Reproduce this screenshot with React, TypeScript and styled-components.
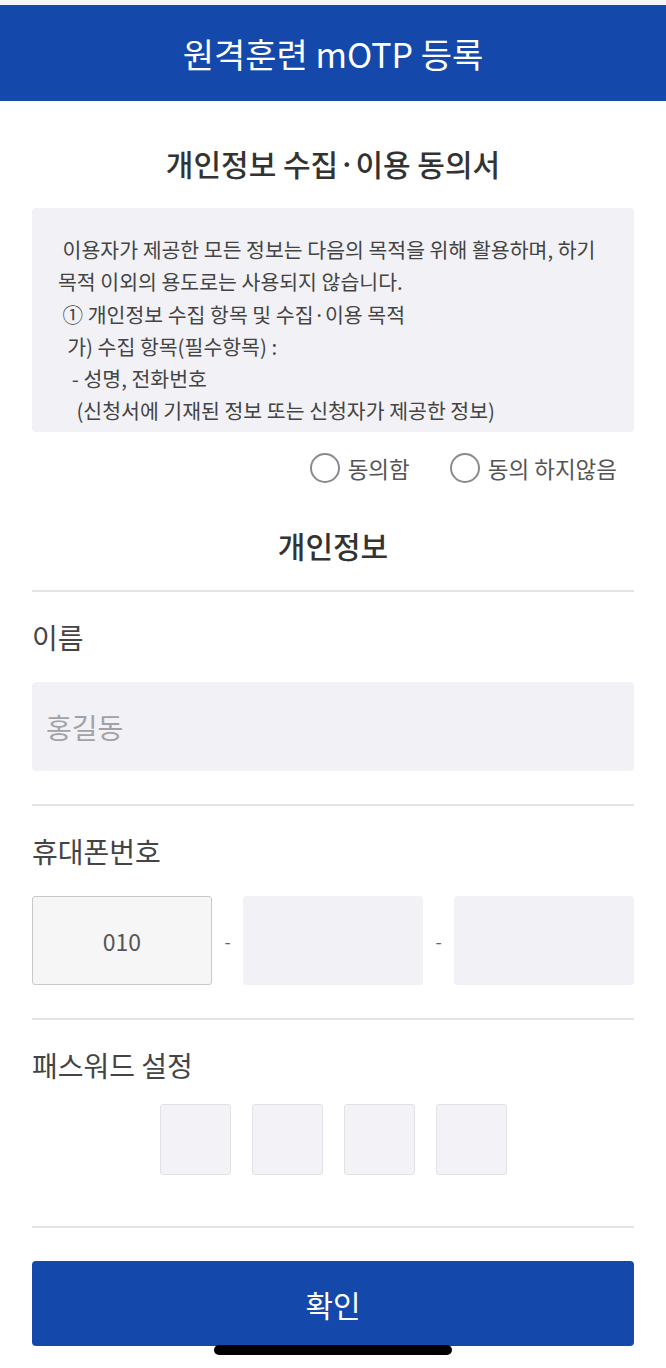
import React from "react";
import styled, { createGlobalStyle } from "styled-components";

const fontStack = `"Noto Sans CJK KR", "Noto Sans", sans-serif`;
const brandBlue = "#1449ab";
const fieldBg = "#f2f2f6";
const lineColor = "#e4e4e6";

const GlobalStyle = createGlobalStyle`
  html, body {
    margin: 0;
    padding: 0;
    background: #ffffff;
  }
  body {
    font-family: ${fontStack};
    -webkit-font-smoothing: antialiased;
  }
  * {
    box-sizing: border-box;
  }
`;

const Screen = styled.div`
  position: relative;
  width: 666px;
  height: 1368px;
  overflow: hidden;
  background: #ffffff;
`;

const StatusStrip = styled.div`
  height: 5px;
  background: #f3f5f8;
`;

const Header = styled.header`
  height: 96px;
  background: ${brandBlue};
  display: flex;
  align-items: center;
  justify-content: center;
`;

const HeaderTitle = styled.h1`
  margin: 0;
  color: #ffffff;
  font-size: 34px;
  font-weight: 400;
`;

const Content = styled.main`
  padding: 0 32px;
`;

const SectionTitle = styled.h2<{ $top: number }>`
  margin: ${(p) => p.$top}px 0 0;
  text-align: center;
  font-size: 30px;
  line-height: 40px;
  font-weight: 500;
  color: #333333;
`;

const TermsBox = styled.div`
  margin-top: 25px;
  height: 224px;
  overflow: hidden;
  background: ${fieldBg};
  border-radius: 4px;
  padding: 25px 16px 0 26px;
`;

const TermsText = styled.p`
  margin: 0;
  white-space: pre-wrap;
  font-size: 20.5px;
  line-height: 32.3px;
  color: #444444;
`;

const ConsentRow = styled.div`
  margin-top: 21px;
  display: flex;
  justify-content: flex-end;
  gap: 40px;
  padding-right: 17px;
`;

const RadioLabel = styled.label`
  display: flex;
  align-items: center;
  gap: 8px;
  height: 30px;
  cursor: pointer;
`;

const RadioCircle = styled.span`
  flex: none;
  width: 30px;
  height: 30px;
  border-radius: 50%;
  border: 2px solid #8a8a8a;
  background: #ffffff;
`;

const RadioText = styled.span`
  font-size: 22.5px;
  line-height: 30px;
  color: #555555;
  white-space: nowrap;
`;

const Divider = styled.hr<{ $top: number }>`
  margin: ${(p) => p.$top}px 0 0;
  border: 0;
  height: 2px;
  background: ${lineColor};
`;

const Field = styled.section`
  padding-top: 26px;
`;

const FieldLabel = styled.div<{ $gap: number }>`
  font-size: 28px;
  line-height: 38px;
  color: #444444;
  margin-bottom: ${(p) => p.$gap}px;
`;

const TextInput = styled.input`
  display: block;
  width: 100%;
  height: 89px;
  border: 0;
  border-radius: 4px;
  background: ${fieldBg};
  padding: 0 14px;
  font-family: ${fontStack};
  font-size: 28px;
  color: #333333;
  outline: none;

  &::placeholder {
    color: #a2a2a6;
  }
`;

const PhoneRow = styled.div`
  display: grid;
  grid-template-columns: 180px 31px 180px 31px 180px;
  align-items: center;
`;

const PhoneBox = styled.input<{ $fixed?: boolean }>`
  height: 89px;
  width: 100%;
  border: ${(p) => (p.$fixed ? "1px solid #c9c9cc" : "0")};
  border-radius: 3px;
  background: ${(p) => (p.$fixed ? "#f6f6f7" : fieldBg)};
  text-align: center;
  font-family: ${fontStack};
  font-size: 23px;
  color: #555555;
  outline: none;
`;

const Dash = styled.span`
  text-align: center;
  font-size: 18px;
  color: #666666;
`;

const PinRow = styled.div`
  display: flex;
  justify-content: center;
  gap: 21px;
`;

const PinBox = styled.input`
  width: 71px;
  height: 71px;
  border: 1px solid #e2e2e6;
  border-radius: 3px;
  background: #f3f3f7;
  text-align: center;
  font-family: ${fontStack};
  font-size: 26px;
  outline: none;
`;

const SubmitButton = styled.button`
  display: block;
  width: 100%;
  height: 85px;
  margin-top: 33px;
  border: 0;
  border-radius: 4px;
  background: ${brandBlue};
  color: #ffffff;
  font-family: ${fontStack};
  font-size: 30px;
  font-weight: 400;
  cursor: pointer;
`;

const HomeIndicator = styled.div`
  position: absolute;
  left: 214px;
  top: 1345px;
  width: 238px;
  height: 10px;
  border-radius: 5px;
  background: #000000;
`;

const terms = [
  " 이용자가 제공한 모든 정보는 다음의 목적을 위해 활용하며, 하기",
  "목적 이외의 용도로는 사용되지 않습니다.",
  " ① 개인정보 수집 항목 및 수집·이용 목적",
  "  가) 수집 항목(필수항목) :",
  "   - 성명, 전화번호",
  "    (신청서에 기재된 정보 또는 신청자가 제공한 정보)",
  "  나) 수집 및 이용 목적 :",
  "   - 원격훈련 본인 확인 및 출결 관리",
].join("\n");

export default function App() {
  return (
    <Screen>
      <GlobalStyle />
      <StatusStrip />
      <Header>
        <HeaderTitle>원격훈련 mOTP 등록</HeaderTitle>
      </Header>
      <Content>
        <SectionTitle $top={42}>개인정보 수집·이용 동의서</SectionTitle>
        <TermsBox>
          <TermsText>{terms}</TermsText>
        </TermsBox>
        <ConsentRow>
          <RadioLabel>
            <RadioCircle />
            <RadioText>동의함</RadioText>
          </RadioLabel>
          <RadioLabel>
            <RadioCircle />
            <RadioText>동의 하지않음</RadioText>
          </RadioLabel>
        </ConsentRow>

        <SectionTitle $top={42}>개인정보</SectionTitle>
        <Divider $top={25} />

        <Field>
          <FieldLabel $gap={26}>이름</FieldLabel>
          <TextInput placeholder="홍길동" />
        </Field>
        <Divider $top={33} />

        <Field>
          <FieldLabel $gap={26}>휴대폰번호</FieldLabel>
          <PhoneRow>
            <PhoneBox $fixed readOnly value="010" />
            <Dash>-</Dash>
            <PhoneBox />
            <Dash>-</Dash>
            <PhoneBox />
          </PhoneRow>
        </Field>
        <Divider $top={33} />

        <Field>
          <FieldLabel $gap={20}>패스워드 설정</FieldLabel>
          <PinRow>
            {[0, 1, 2, 3].map((i) => (
              <PinBox key={i} type="password" maxLength={1} />
            ))}
          </PinRow>
        </Field>
        <Divider $top={51} />

        <SubmitButton>확인</SubmitButton>
      </Content>
      <HomeIndicator />
    </Screen>
  );
}
